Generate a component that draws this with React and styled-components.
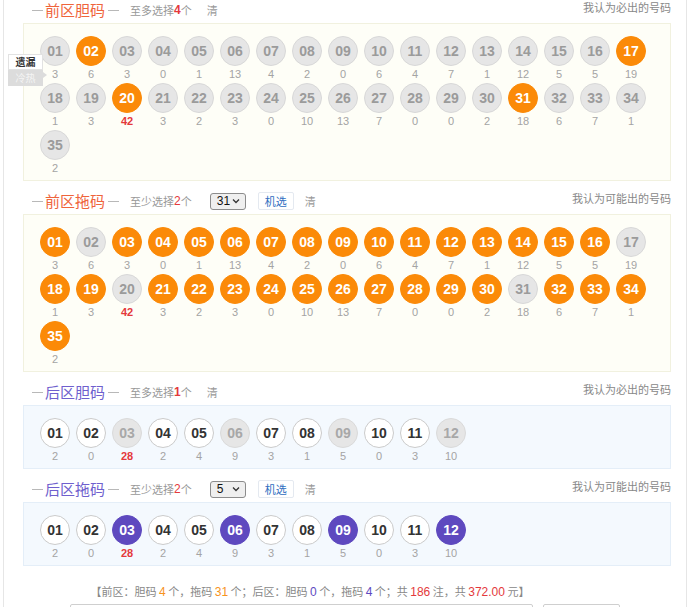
import React from 'react';
import styled, { createGlobalStyle } from 'styled-components';

const Global = createGlobalStyle`
  html, body { margin: 0; padding: 0; background: #fff; }
  body { font-family: "Noto Sans CJK SC", "Liberation Sans", sans-serif; color: #666; }
`;

const Page = styled.div`
  position: relative;
  margin-left: 3px;
  width: 682px;
  min-height: 640px;
  border-left: 1px solid #e6e6e6;
  border-right: 1px solid #e6e6e6;
`;

const Tabs = styled.div`
  position: absolute;
  left: 4px;
  top: 54px;
  width: 35px;
  display: flex;
  flex-direction: column;
`;

const Tab = styled.div`
  position: relative;
  height: 14px;
  line-height: 14px;
  font-size: 10px;
  text-align: center;
  color: ${p => (p.$active ? '#333' : '#f4f4f4')};
  font-weight: ${p => (p.$active ? 'bold' : 'normal')};
  background: ${p => (p.$active ? '#fff' : '#dcdcdc')};
  border: 1px solid ${p => (p.$active ? '#e2e2e2' : '#dcdcdc')};
  &::after {
    content: '';
    display: ${p => (p.$active ? 'none' : 'block')};
    position: absolute;
    right: -5px;
    top: 1px;
    border-left: 4px solid #dcdcdc;
    border-top: 3px solid transparent;
    border-bottom: 3px solid transparent;
  }
`;

const Section = styled.section`
  margin: 0 15px 0 19px;
  & + & { margin-top: 10px; }
`;

const Header = styled.div`
  display: flex;
  align-items: center;
  height: 20px;
  padding-left: 9px;
  margin-bottom: 3px;
`;

const Dash = styled.span`
  display: inline-block;
  width: 11px;
  height: 1px;
  margin-top: 1px;
  background: #b8b8b8;
`;

const Title = styled.span`
  font-size: 15px;
  line-height: 20px;
  color: ${p => p.$color};
  margin: 0 3px 0 2px;
`;

const Hint = styled.span`
  margin-left: 11px;
  font-size: 11px;
  color: #999;
  display: flex;
  align-items: center;
  b {
    color: #e4393c;
    font-family: "Liberation Sans", sans-serif;
    font-size: 12px;
    font-weight: ${p => (p.$boldNum ? 'bold' : 'normal')};
  }
`;

const Clear = styled.span`
  margin-left: ${p => p.$gap}px;
  font-size: 11px;
  color: #999;
`;

const Select = styled.span`
  margin-left: 18px;
  box-sizing: border-box;
  width: 36px;
  height: 17px;
  border: 1px solid #8c8c8c;
  border-radius: 3px;
  background: #efefef;
  display: flex;
  align-items: center;
  justify-content: space-between;
  padding: 0 5px 0 6px;
  font-family: "Liberation Sans", sans-serif;
  font-size: 12px;
  color: #111;
`;

const RandBtn = styled.span`
  margin-left: 12px;
  box-sizing: border-box;
  width: 36px;
  height: 18px;
  border: 1px solid #e4e9f0;
  border-radius: 2px;
  background: #fff;
  color: #2e6cc0;
  font-size: 11px;
  display: flex;
  align-items: center;
  justify-content: center;
`;

const Note = styled.span`
  margin-left: auto;
  align-self: flex-start;
  font-size: 11px;
  line-height: 14px;
  color: #888;
`;

const Box = styled.div`
  border: 1px solid ${p => p.$border};
  background: ${p => p.$bg};
  padding: 12px 14px 3px 16px;
  display: flex;
  flex-wrap: wrap;
  column-gap: 6px;
`;

const Cell = styled.div`
  width: 30px;
  display: flex;
  flex-direction: column;
  align-items: center;
`;

const ballColors = {
  off: ['#e6e6e6', '#d8d8d8', '#9b9b9b'],
  orange: ['#fb8a08', '#fb8a08', '#fff'],
  purple: ['#5e49bf', '#5e49bf', '#fff'],
  white: ['#fff', '#cbcbcb', '#333'],
  dis: ['#e6e6e6', '#dadada', '#a8a8a8'],
};

const Ball = styled.span`
  box-sizing: border-box;
  width: 30px;
  height: 30px;
  border-radius: 50%;
  border: 1px solid ${p => ballColors[p.$v][1]};
  background: ${p => ballColors[p.$v][0]};
  color: ${p => ballColors[p.$v][2]};
  font-family: "Liberation Sans", Arial, sans-serif;
  font-weight: bold;
  font-size: 14px;
  display: flex;
  align-items: center;
  justify-content: center;
`;

const Count = styled.span`
  height: 17px;
  line-height: 17px;
  font-family: "Liberation Sans", sans-serif;
  font-size: 11px;
  color: ${p => (p.$hot ? '#e4393c' : '#a4a4a4')};
  font-weight: ${p => (p.$hot ? 'bold' : 'normal')};
`;

const Footer = styled.div`
  width: 612px;
  margin-top: 15px;
  text-align: center;
  font-size: 11px;
  line-height: 20px;
  color: #888;
`;

const Num = styled.span`
  font-family: "Liberation Sans", sans-serif;
  font-size: 12px;
  color: ${p => p.$color};
`;

const BottomRow = styled.div`
  display: flex;
  gap: 10px;
  padding-left: 66px;
  margin-top: 2px;
`;

const Field = styled.div`
  box-sizing: border-box;
  width: ${p => p.$w}px;
  height: 30px;
  border: 1px solid #cfcfcf;
  border-radius: 2px;
  background: #fff;
`;

const frontCounts = [3, 6, 3, 0, 1, 13, 4, 2, 0, 6, 4, 7, 1, 12, 5, 5, 19, 1, 3, 42, 3, 2, 3, 0, 10, 13, 7, 0, 0, 2, 18, 6, 7, 1, 2];
const backCounts = [2, 0, 28, 2, 4, 9, 3, 1, 5, 0, 3, 10];
const frontDan = [2, 17, 20, 31];
const backTuo = [3, 6, 9, 12];

const pad = n => String(n).padStart(2, '0');

const Chevron = () => (
  <svg width="8" height="6" viewBox="0 0 8 6">
    <path d="M1 1.5 L4 4.5 L7 1.5" fill="none" stroke="#333" strokeWidth="1.3" />
  </svg>
);

const Balls = ({ counts, variantOf, hotAt, bg, border }) => (
  <Box $bg={bg} $border={border}>
    {counts.map((c, i) => (
      <Cell key={i}>
        <Ball $v={variantOf(i + 1)}>{pad(i + 1)}</Ball>
        <Count $hot={c >= hotAt}>{c}</Count>
      </Cell>
    ))}
  </Box>
);

const ORANGE_T = '#ef643b';
const PURPLE_T = '#6f5fce';

export default function App() {
  return (
    <Page>
      <Global />
      <Tabs>
        <Tab $active>遗漏</Tab>
        <Tab>冷热</Tab>
      </Tabs>

      <Section>
        <Header>
          <Dash />
          <Title $color={ORANGE_T}>前区胆码</Title>
          <Dash />
          <Hint $boldNum>至多选择<b>4</b>个</Hint>
          <Clear $gap={15}>清</Clear>
          <Note>我认为必出的号码</Note>
        </Header>
        <Balls
          counts={frontCounts}
          hotAt={40}
          bg="#fefef7"
          border="#f1f1df"
          variantOf={n => (frontDan.includes(n) ? 'orange' : 'off')}
        />
      </Section>

      <Section>
        <Header>
          <Dash />
          <Title $color={ORANGE_T}>前区拖码</Title>
          <Dash />
          <Hint>至少选择<b>2</b>个</Hint>
          <Select>31<Chevron /></Select>
          <RandBtn>机选</RandBtn>
          <Clear $gap={11}>清</Clear>
          <Note>我认为可能出的号码</Note>
        </Header>
        <Balls
          counts={frontCounts}
          hotAt={40}
          bg="#fefef7"
          border="#f1f1df"
          variantOf={n => (frontDan.includes(n) ? 'off' : 'orange')}
        />
      </Section>

      <Section>
        <Header>
          <Dash />
          <Title $color={PURPLE_T}>后区胆码</Title>
          <Dash />
          <Hint $boldNum>至多选择<b>1</b>个</Hint>
          <Clear $gap={15}>清</Clear>
          <Note>我认为必出的号码</Note>
        </Header>
        <Balls
          counts={backCounts}
          hotAt={20}
          bg="#f4f9fe"
          border="#e4eef8"
          variantOf={n => (backTuo.includes(n) ? 'dis' : 'white')}
        />
      </Section>

      <Section>
        <Header>
          <Dash />
          <Title $color={PURPLE_T}>后区拖码</Title>
          <Dash />
          <Hint>至少选择<b>2</b>个</Hint>
          <Select>5<Chevron /></Select>
          <RandBtn>机选</RandBtn>
          <Clear $gap={11}>清</Clear>
          <Note>我认为可能出的号码</Note>
        </Header>
        <Balls
          counts={backCounts}
          hotAt={20}
          bg="#f4f9fe"
          border="#e4eef8"
          variantOf={n => (backTuo.includes(n) ? 'purple' : 'white')}
        />
      </Section>

      <Footer>
        【前区：胆码 <Num $color="#f7931e">4</Num> 个，拖码 <Num $color="#f7931e">31</Num> 个；后区：胆码{' '}
        <Num $color="#5e49bf">0</Num> 个，拖码 <Num $color="#5e49bf">4</Num> 个；共{' '}
        <Num $color="#e4393c">186</Num> 注，共 <Num $color="#e4393c">372.00</Num> 元】
      </Footer>
      <BottomRow>
        <Field $w={463} />
        <Field $w={77} />
      </BottomRow>
    </Page>
  );
}
